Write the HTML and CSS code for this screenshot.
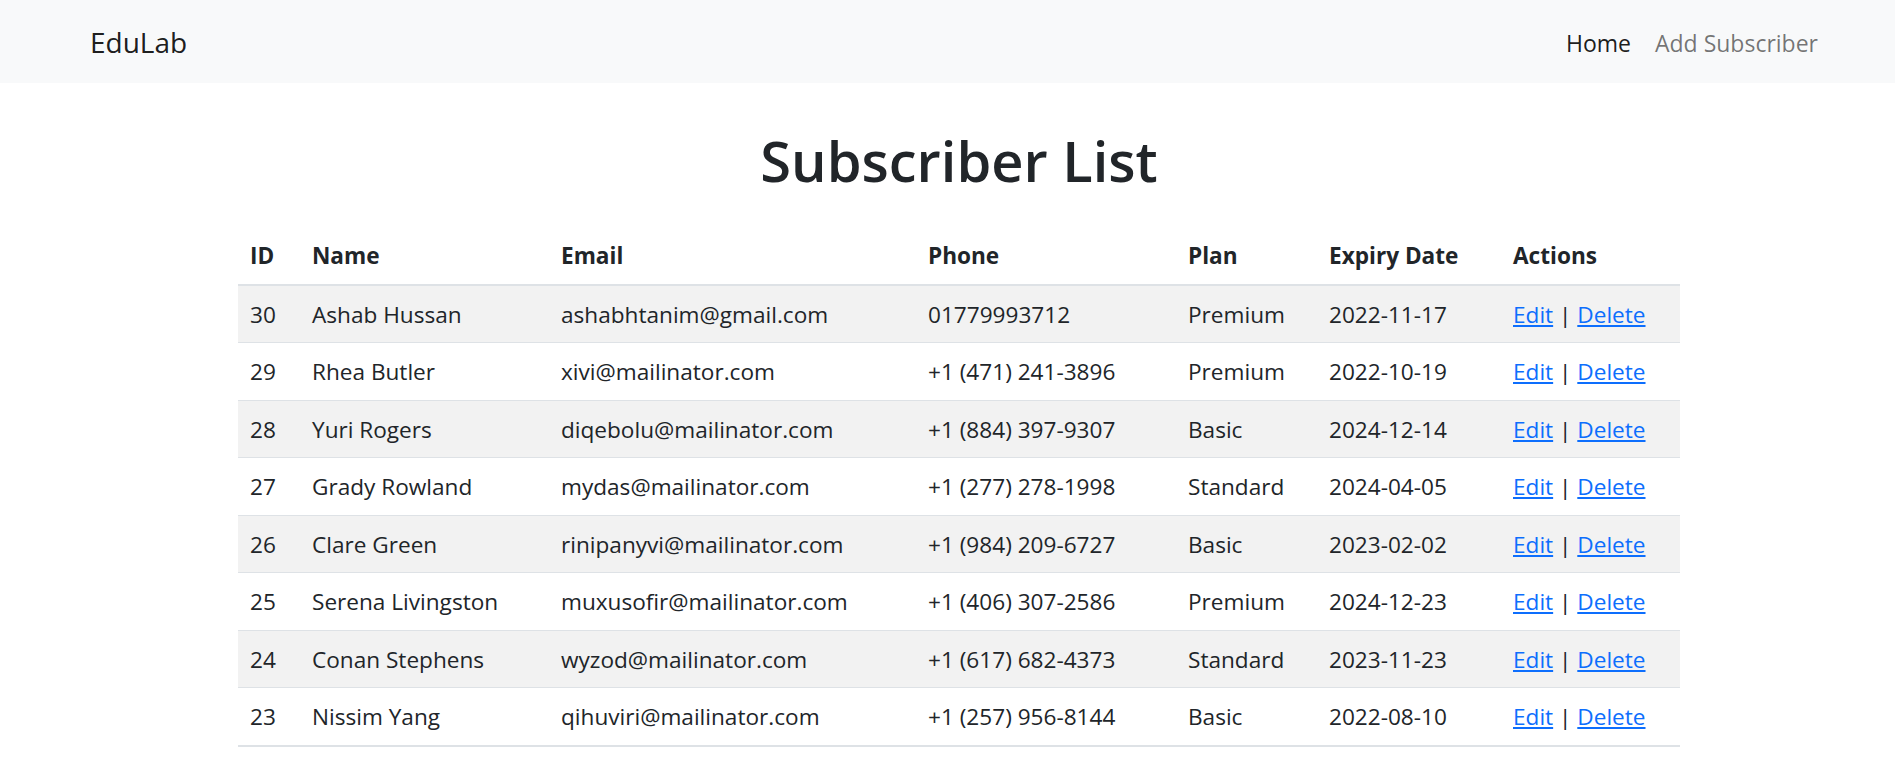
FILE: index.html
```html
<!DOCTYPE html>
<html lang="en">
<head>
<meta charset="utf-8">
<title>EduLab - Subscriber List</title>
<link rel="stylesheet" href="styles.css">
</head>
<body>
<nav class="navbar">
  <a class="brand" href="#">EduLab</a>
  <ul class="nav-links">
    <li><a class="nav-link active" href="#">Home</a></li>
    <li><a class="nav-link" href="#">Add Subscriber</a></li>
  </ul>
</nav>
<main class="content">
  <h1 class="title">Subscriber List</h1>
  <table class="table">
    <colgroup>
      <col class="c-id"><col class="c-name"><col class="c-email"><col class="c-phone"><col class="c-plan"><col class="c-date"><col class="c-actions">
    </colgroup>
    <thead>
      <tr><th>ID</th><th>Name</th><th>Email</th><th>Phone</th><th>Plan</th><th>Expiry Date</th><th>Actions</th></tr>
    </thead>
    <tbody>
      <tr><td>30</td><td>Ashab Hussan</td><td>ashabhtanim@gmail.com</td><td>01779993712</td><td>Premium</td><td>2022-11-17</td><td><a href="#">Edit</a> | <a href="#">Delete</a></td></tr>
      <tr><td>29</td><td>Rhea Butler</td><td>xivi@mailinator.com</td><td>+1 (471) 241-3896</td><td>Premium</td><td>2022-10-19</td><td><a href="#">Edit</a> | <a href="#">Delete</a></td></tr>
      <tr><td>28</td><td>Yuri Rogers</td><td>diqebolu@mailinator.com</td><td>+1 (884) 397-9307</td><td>Basic</td><td>2024-12-14</td><td><a href="#">Edit</a> | <a href="#">Delete</a></td></tr>
      <tr><td>27</td><td>Grady Rowland</td><td>mydas@mailinator.com</td><td>+1 (277) 278-1998</td><td>Standard</td><td>2024-04-05</td><td><a href="#">Edit</a> | <a href="#">Delete</a></td></tr>
      <tr><td>26</td><td>Clare Green</td><td>rinipanyvi@mailinator.com</td><td>+1 (984) 209-6727</td><td>Basic</td><td>2023-02-02</td><td><a href="#">Edit</a> | <a href="#">Delete</a></td></tr>
      <tr><td>25</td><td>Serena Livingston</td><td>muxusofir@mailinator.com</td><td>+1 (406) 307-2586</td><td>Premium</td><td>2024-12-23</td><td><a href="#">Edit</a> | <a href="#">Delete</a></td></tr>
      <tr><td>24</td><td>Conan Stephens</td><td>wyzod@mailinator.com</td><td>+1 (617) 682-4373</td><td>Standard</td><td>2023-11-23</td><td><a href="#">Edit</a> | <a href="#">Delete</a></td></tr>
      <tr><td>23</td><td>Nissim Yang</td><td>qihuviri@mailinator.com</td><td>+1 (257) 956-8144</td><td>Basic</td><td>2022-08-10</td><td><a href="#">Edit</a> | <a href="#">Delete</a></td></tr>
    </tbody>
  </table>
</main>
</body>
</html>
```
FILE: styles.css
```css
html, body {
  margin: 0;
  padding: 0;
}
body {
  font-family: "Open Sans", "Noto Sans", "Liberation Sans", sans-serif;
  font-size: 22.6px;
  line-height: 1.5;
  color: #212529;
  background: #fff;
  overflow: hidden;
}
a { color: #0d6efd; }

.navbar {
  display: flex;
  align-items: center;
  justify-content: space-between;
  height: 83px;
  box-sizing: border-box;
  padding: 0 65px 0 90px;
  background: #f8f9fa;
}
.brand {
  font-size: 28px;
  line-height: 45px;
  padding-top: 2px;
  color: rgba(0, 0, 0, 0.9);
  text-decoration: none;
}
.nav-links {
  display: flex;
  list-style: none;
  margin: 0;
  padding: 0;
}
.nav-link {
  display: block;
  padding: 2px 12px 0;
  font-size: 23px;
  line-height: 36px;
  color: rgba(0, 0, 0, 0.55);
  text-decoration: none;
}
.nav-link.active { color: rgba(0, 0, 0, 0.9); }

.content {
  width: 1442px;
  margin-left: 238px;
  padding-top: 41px;
}
.title {
  margin: 0 0 31px;
  text-align: center;
  font-size: 56px;
  font-weight: 600;
  line-height: 72px;
}
.table {
  width: 100%;
  table-layout: fixed;
  border-collapse: collapse;
}
.c-id { width: 62px; }
.c-name { width: 249px; }
.c-email { width: 367px; }
.c-phone { width: 260px; }
.c-plan { width: 141px; }
.c-date { width: 184px; }
.c-actions { width: 179px; }
.table th, .table td {
  padding: 13px 12px 11px;
  line-height: 32.5px;
  text-align: left;
  white-space: nowrap;
  border-bottom: 1px solid #dee2e6;
}
.table th {
  font-weight: 700;
  border-bottom-width: 2px;
}
.table tbody tr:nth-child(odd) td { background: #f2f2f2; }
.table tbody tr:last-child td { border-bottom-width: 2px; }
```
